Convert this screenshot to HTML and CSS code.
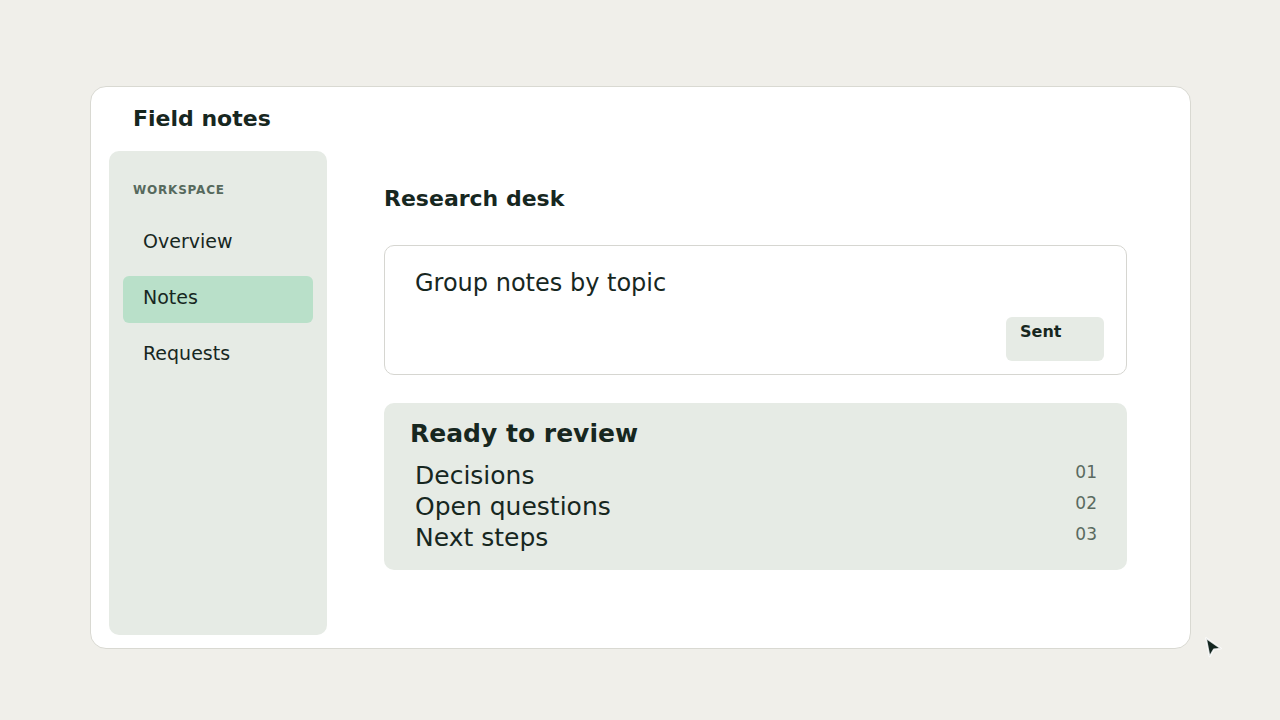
FILE: index.html
```html
<!DOCTYPE html>
<html lang="en">
<head>
<meta charset="utf-8">
<title>Field notes</title>
<link rel="stylesheet" href="styles.css">
</head>
<body>
<div class="page">
  <div class="app">
    <header class="app-header">
      <h1 class="app-title">Field notes</h1>
    </header>
    <div class="app-body">
      <aside class="sidebar">
        <div class="sidebar-label">WORKSPACE</div>
        <nav class="nav">
          <a class="nav-item">Overview</a>
          <a class="nav-item is-active">Notes</a>
          <a class="nav-item">Requests</a>
        </nav>
      </aside>
      <main class="main">
        <h2 class="main-title">Research desk</h2>
        <section class="compose">
          <div class="compose-text">Group notes by topic</div>
          <div class="compose-actions">
            <button class="btn-sent">Sent</button>
          </div>
        </section>
        <section class="review">
          <h3 class="review-title">Ready to review</h3>
          <ul class="review-list">
            <li class="review-row"><span class="review-name">Decisions</span><span class="review-num">01</span></li>
            <li class="review-row"><span class="review-name">Open questions</span><span class="review-num">02</span></li>
            <li class="review-row"><span class="review-name">Next steps</span><span class="review-num">03</span></li>
          </ul>
        </section>
      </main>
    </div>
  </div>
  <svg class="cursor" width="24" height="26" viewBox="0 0 24 26" aria-hidden="true">
    <path d="M3 3 L18 13.5 L10.8 14.4 L6.6 21.5 Z" fill="#142620" stroke="#ffffff" stroke-opacity="0.85" stroke-width="1.6" stroke-linejoin="round"/>
  </svg>
</div>
</body>
</html>
```

FILE: styles.css
```css
* { box-sizing: border-box; }

html, body {
  margin: 0;
  padding: 0;
}

body {
  background: #f0efea;
  font-family: "DejaVu Sans", Verdana, sans-serif;
  color: #17271f;
  width: 1280px;
  height: 720px;
  overflow: hidden;
}

.page {
  position: relative;
  padding: 86px 90px 0 90px;
  height: 720px;
}

.app {
  width: 1101px;
  height: 563px;
  background: #ffffff;
  border: 1px solid #d9d9d2;
  border-radius: 16px;
  padding: 0 18px 13px 18px;
  display: flex;
  flex-direction: column;
}

.app-header {
  height: 64px;
  padding-left: 24px;
  display: flex;
  align-items: center;
}

.app-title {
  margin: 0;
  font-size: 22px;
  line-height: 26px;
  font-weight: 700;
}

.app-body {
  flex: 1;
  display: flex;
}

.sidebar {
  width: 218px;
  background: #e6ebe5;
  border-radius: 10px;
  padding: 31px 14px 14px 14px;
}

.sidebar-label {
  padding-left: 10px;
  font-size: 12px;
  line-height: 16px;
  font-weight: 700;
  letter-spacing: 0.8px;
  color: #56695d;
  margin-bottom: 22px;
}

.nav {
  display: flex;
  flex-direction: column;
  gap: 9px;
}

.nav-item {
  display: block;
  height: 47px;
  padding: 10px 20px 0 20px;
  font-size: 19px;
  line-height: 23px;
  border-radius: 6px;
  color: #17271f;
}

.nav-item.is-active {
  background: #b9e0c9;
}

.main {
  flex: 1;
  padding: 35px 45px 0 57px;
}

.main-title {
  margin: 0 0 33px 0;
  font-size: 22px;
  line-height: 26px;
  font-weight: 700;
}

.compose {
  border: 1px solid #d6d6d1;
  border-radius: 10px;
  padding: 22px 22px 13px 30px;
  height: 130px;
  display: flex;
  flex-direction: column;
}

.compose-text {
  font-size: 24px;
  line-height: 30px;
}

.compose-actions {
  margin-top: auto;
  display: flex;
  justify-content: flex-end;
}

.btn-sent {
  width: 98px;
  height: 44px;
  margin: 0;
  border: none;
  border-radius: 6px;
  background: #e6ebe5;
  font-family: "DejaVu Sans", Verdana, sans-serif;
  font-size: 16px;
  line-height: 20px;
  font-weight: 700;
  color: #17271f;
  padding: 5px 14px 0 14px;
  display: flex;
  align-items: flex-start;
  justify-content: flex-start;
}

.review {
  margin-top: 28px;
  background: #e6ebe5;
  border-radius: 10px;
  padding: 16px 30px 17px 26px;
}

.review-title {
  margin: 0 0 11px 0;
  font-size: 25px;
  line-height: 30px;
  font-weight: 700;
}

.review-list {
  list-style: none;
  margin: 0;
  padding: 0 0 0 5px;
}

.review-row {
  display: flex;
  justify-content: space-between;
  align-items: flex-start;
}

.review-name {
  font-size: 25px;
  line-height: 31px;
}

.review-num {
  font-size: 17px;
  line-height: 24px;
  color: #5a6a60;
}

.cursor {
  position: absolute;
  left: 1203px;
  top: 635px;
}
```
